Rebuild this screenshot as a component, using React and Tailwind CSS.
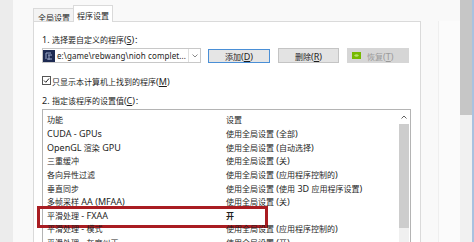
import React from "react";

const CJK = /[\u2E80-\u9FFF\uFF00-\uFFEF\u3000-\u303F]/;
const T = ({ s }) =>
  s
    .split(/([\u2E80-\u9FFF\uFF00-\uFFEF\u3000-\u303F]+)/)
    .map((p, i) =>
      p ? (
        <span key={i} className={CJK.test(p) ? "text-[8px]" : "text-[9px]"}>
          {p}
        </span>
      ) : null
    );

const rows = [
  ["CUDA - GPUs", "使用全局设置 (全部)"],
  ["OpenGL 渲染 GPU", "使用全局设置 (自动选择)"],
  ["三重缓冲", "使用全局设置 (关)"],
  ["各向异性过滤", "使用全局设置 (应用程序控制的)"],
  ["垂直同步", "使用全局设置 (使用 3D 应用程序设置)"],
  ["多帧采样 AA (MFAA)", "使用全局设置 (关)"],
  ["平滑处理 - FXAA", "开", true],
  ["平滑处理 - 模式", "使用全局设置 (应用程序控制的)"],
  ["平滑处理 - 灰度纠正", "使用全局设置 (开)"],
];

export default function App() {
  return (
    <div
      className="w-[474px] h-[242px] flex overflow-hidden bg-[#f9f9f9] text-[#1e1e1e] leading-[12px]"
      style={{ fontFamily: '"Noto Sans", "Noto Sans CJK SC", sans-serif' }}
    >
      <div className="w-[13px] shrink-0 bg-[#ececec]" />
      <div className="flex-1 flex flex-col pl-[20px] pt-[5px]">
        {/* tabs */}
        <div className="flex items-end h-[17px]">
          <div className="h-[13px] w-[41px] border border-b-0 border-[#dadada] bg-[#f3f3f3] pl-[4px] leading-[12px] whitespace-nowrap">
            <T s="全局设置" />
          </div>
          <div className="h-[17px] w-[40px] -ml-px bg-white border border-b-0 border-[#dadada] relative z-10 -mb-px pl-[3px] pt-[1px] leading-[12px] whitespace-nowrap">
            <T s="程序设置" />
          </div>
        </div>
        <div className="flex flex-1">
          {/* panel */}
          <div className="w-[388px] shrink-0 bg-white border border-[#dadada] border-b-0 pl-[8px] pt-[9px] flex flex-col">
            <div className="h-[12px] leading-[12px] whitespace-nowrap">
              <T s="1. 选择要自定义的程序(" />
              <span className="text-[9px] underline">S</span>
              <T s=")：" />
            </div>
            <div className="flex items-center mt-[5px] h-[15px]">
              <div className="w-[159px] h-[15px] border border-[#c8c8c8] flex items-center overflow-hidden">
                <svg width="12" height="12" viewBox="0 0 12 12" className="shrink-0">
                  <rect width="12" height="12" fill="#1d2a52" />
                  <path d="M3 3h5M3 3v6M5 5h4M6 5v5M4 9h5" stroke="#9aa6c8" strokeWidth="1" fill="none" />
                </svg>
                <span className="text-[8px] ml-[2px] whitespace-nowrap tracking-[0.1px]">e:\game\rebwang\nioh complet...</span>
                <div className="ml-auto w-[12px] shrink-0 h-full border-l border-[#dedede] flex items-center justify-center">
                  <svg width="6" height="4" viewBox="0 0 6 4">
                    <path d="M0.5 0.5L3 3L5.5 0.5" stroke="#8a8a8a" fill="none" />
                  </svg>
                </div>
              </div>
              <div className="ml-[7px] w-[62px] h-[14px] border border-[#4a8fd6] bg-[#e5e5e5] flex items-center justify-center">
                <span className="leading-[12px] whitespace-nowrap">
                  <T s="添加(" />
                  <span className="text-[9px] underline">D</span>
                  <T s=")" />
                </span>
              </div>
              <div className="ml-[8px] w-[61px] h-[15px] border border-[#c4c4c4] bg-[#e3e3e3] flex items-center justify-center">
                <span className="leading-[12px] whitespace-nowrap">
                  <T s="删除(" />
                  <span className="text-[9px] underline">R</span>
                  <T s=")" />
                </span>
              </div>
              <div className="ml-[8px] w-[62px] h-[15px] bg-[#d6d6d6] flex items-center text-[#9a9a9a]">
                <svg width="9" height="7" viewBox="0 0 9 7" className="ml-[5px] mr-[6px] shrink-0">
                  <rect width="9" height="7" fill="#76b900" />
                  <path d="M2 3.5Q4.5 1 7 3.5Q4.5 6 2 3.5" fill="#b6e26a" />
                </svg>
                <span className="leading-[12px] whitespace-nowrap">
                  <T s="恢复(" />
                  <span className="text-[9px] underline">T</span>
                  <T s=")" />
                </span>
              </div>
            </div>
            <div className="flex items-center mt-[11px] h-[12px]">
              <svg width="9" height="9" viewBox="0 0 9 9" className="mr-[1px] shrink-0">
                <rect x="0.5" y="0.5" width="8" height="8" fill="white" stroke="#555" />
                <path d="M2 4.5L3.8 6.3L7 2.5" stroke="#222" fill="none" strokeWidth="1" />
              </svg>
              <span className="leading-[12px] whitespace-nowrap">
                <T s="只显示本计算机上找到的程序(" />
                <span className="text-[9px] underline">M</span>
                <T s=")" />
              </span>
            </div>
            <div className="mt-[6px] h-[12px] leading-[12px] whitespace-nowrap">
              <T s="2. 指定该程序的设置值(" />
              <span className="text-[9px] underline">C</span>
              <T s=")：" />
            </div>
            {/* list */}
            <div className="mt-[5px] w-[369px] flex-1 border border-[#b4b4b4] border-b-0 flex">
              <div className="flex-1 flex flex-col">
                <div className="h-[16px] flex items-center shrink-0">
                  <div className="w-[183px] pl-[4px] leading-[14px] whitespace-nowrap">
                    <T s="功能" />
                  </div>
                  <div className="leading-[14px] whitespace-nowrap">
                    <T s="设置" />
                  </div>
                </div>
                {rows.map(([a, b, hl], i) => (
                  <div key={i} className="h-[13.6px] flex items-center relative shrink-0">
                    {hl && (
                      <div className="absolute left-[-6px] top-[-2px] w-[231px] h-[22px] border-[3px] border-[#a91d22]" />
                    )}
                    <div className="w-[183px] pl-[4px] leading-[13px] whitespace-nowrap">
                      <T s={a} />
                    </div>
                    <div className={"leading-[13px] whitespace-nowrap " + (hl ? "font-bold" : "")}>
                      <T s={b} />
                    </div>
                  </div>
                ))}
              </div>
              <div className="w-[10px] flex flex-col mr-[1px]">
                <div className="h-[14px] flex items-center justify-center">
                  <svg width="6" height="4" viewBox="0 0 6 4">
                    <path d="M0.5 3.5L3 1L5.5 3.5" stroke="#606060" fill="none" />
                  </svg>
                </div>
                <div className="h-[104px] bg-[#cdcdcd]" />
                <div className="flex-1 bg-[#f0f0f0]" />
              </div>
            </div>
          </div>
          {/* area right of panel */}
          <div className="flex-1 flex">
            <div className="w-[18px] border-r border-[#efefef]" />
            <div className="flex-1 bg-[#fbfbfb]" />
          </div>
        </div>
      </div>
      <div className="w-[12px] shrink-0 flex flex-col">
        <div className="h-[115px] bg-[#c6c6c6]" />
        <div className="flex-1 bg-[#f1f1f1]" />
      </div>
      <div className="w-[2px] shrink-0 bg-[#a9c2e0]" />
    </div>
  );
}
